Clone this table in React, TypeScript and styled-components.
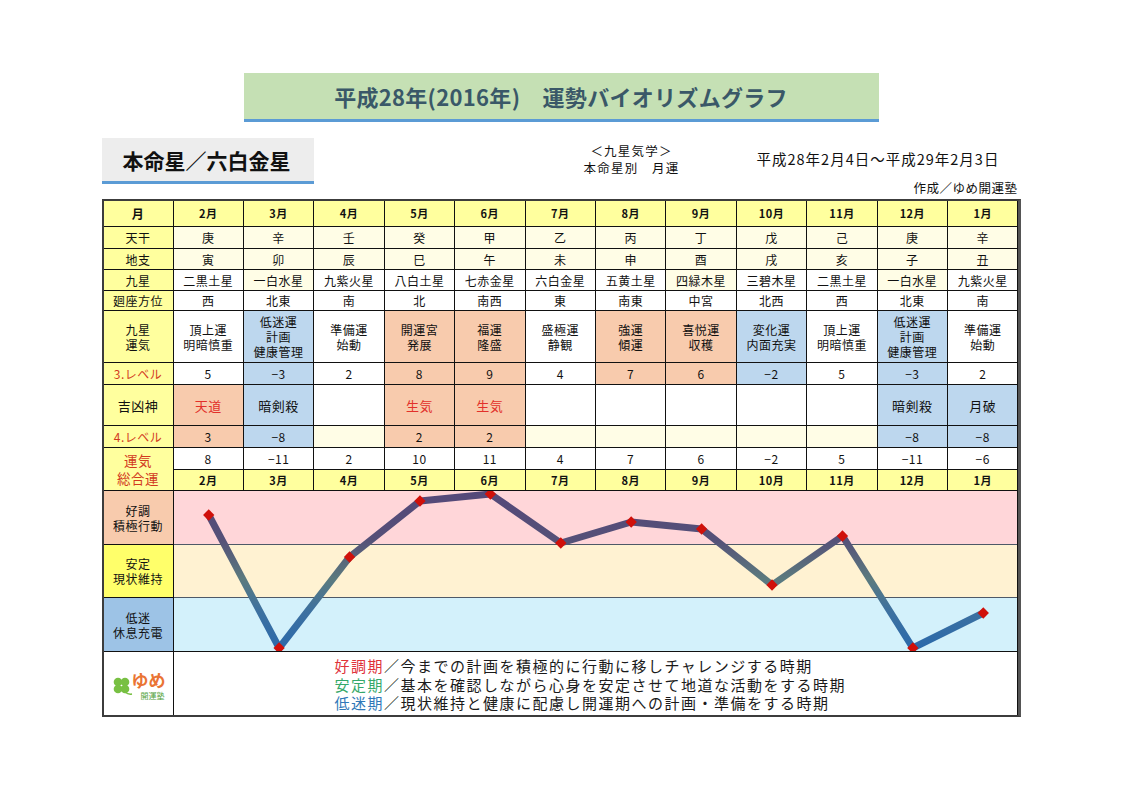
import React from "react";
import styled, { createGlobalStyle } from "styled-components";

const GlobalStyle = createGlobalStyle`
  html, body {
    margin: 0;
    padding: 0;
    background: #fff;
  }
  body {
    font-family: "Noto Sans CJK JP", "Noto Sans", sans-serif;
    color: #111;
  }
`;

type Tone = "white" | "cream" | "peach" | "blue" | "yellow" | "bright" | "sky";

const toneColor: Record<Tone, string> = {
  white: "#ffffff",
  cream: "#fffde6",
  peach: "#f8cbad",
  blue: "#bdd7ee",
  yellow: "#ffff9e",
  bright: "#ffff6a",
  sky: "#9dc3e6",
};

const Page = styled.div`
  width: 1122px;
  padding-top: 73px;
`;

const Content = styled.div`
  width: 919px;
  margin: 0 auto;
`;

const TitleBar = styled.div`
  width: 635px;
  height: 46px;
  margin: 0 auto;
  background: #c5e0b4;
  border-bottom: 3px solid #5b9bd5;
  display: flex;
  align-items: center;
  justify-content: center;
  font-size: 22px;
  font-weight: 700;
  color: #3a5868;
  letter-spacing: 0.3px;
`;

const HeaderRow = styled.div`
  height: 61px;
  margin-top: 16px;
  display: flex;
  align-items: flex-start;
`;

const SubBox = styled.div`
  width: 212px;
  height: 46px;
  box-sizing: border-box;
  background: #ededed;
  border-bottom: 3px solid #5b9bd5;
  display: flex;
  align-items: center;
  padding-left: 21px;
  font-size: 21px;
  font-weight: 700;
  color: #111;
`;

const Kigaku = styled.div`
  width: 100px;
  margin-left: 268px;
  margin-top: 4px;
  text-align: center;
  font-size: 12.5px;
  line-height: 17px;
  letter-spacing: 1.2px;
`;

const RightCol = styled.div`
  width: 263px;
  margin-left: 75px;
  display: flex;
  flex-direction: column;
`;

const DateText = styled.div`
  margin-top: 11px;
  font-size: 14.5px;
  line-height: 20px;
  letter-spacing: 1px;
`;

const Credit = styled.div`
  margin-top: 11px;
  text-align: right;
  padding-right: 2px;
  font-size: 12.5px;
  line-height: 16px;
  letter-spacing: 0.5px;
`;

const Table = styled.div`
  display: grid;
  grid-template-columns: 69px repeat(12, 1fr);
  grid-template-rows: 25px 21px 20px 20px 19px 51px 21px 40px 21px 21px 20px 53px 52px 53px 63px;
  gap: 1px;
  background: #111;
  border: 2px solid #3c3c3c;
  border-right: 3px solid #555;
`;

const Cell = styled.div<{ $tone?: Tone; $red?: boolean; $bold?: boolean; $size?: number; $span?: number }>`
  background: ${(p) => toneColor[p.$tone ?? "white"]};
  color: ${(p) => (p.$red ? "#d23a1e" : "#111")};
  font-weight: ${(p) => (p.$bold ? 700 : 400)};
  font-size: ${(p) => p.$size ?? 12}px;
  line-height: ${(p) => (p.$span ? 18 : 15)}px;
  letter-spacing: 0.5px;
  display: flex;
  flex-direction: column;
  align-items: center;
  justify-content: center;
  text-align: center;
  grid-row: ${(p) => (p.$span ? `span ${p.$span}` : "auto")};
`;

const LuckText = styled.span<{ $red?: boolean }>`
  color: ${(p) => (p.$red ? "#e2302a" : "#111")};
  font-size: 13px;
`;

const ChartBox = styled.div`
  grid-column: 2 / span 12;
  grid-row: 12 / span 3;
  background: #fff;
  svg {
    display: block;
    width: 100%;
    height: 100%;
  }
`;

const LogoCell = styled.div`
  background: #fff;
  display: flex;
  align-items: center;
  justify-content: center;
  padding-top: 4px;
`;

const LogoText = styled.div`
  display: flex;
  flex-direction: column;
  align-items: flex-end;
  margin-left: -1px;
`;

const LogoYume = styled.span`
  display: block;
  color: #ea7434;
  font-size: 17px;
  font-weight: 700;
  line-height: 19px;
`;

const LogoSchool = styled.span`
  display: block;
  color: #54a23c;
  font-size: 8px;
  line-height: 10px;
  margin-top: 2px;
  margin-right: 1px;
`;

const LegendCell = styled.div`
  grid-column: 2 / span 12;
  background: #fff;
  padding: 5px 0 0 161px;
  font-size: 15px;
  line-height: 18.5px;
  letter-spacing: 1.5px;
  color: #1a1a1a;
`;

const Term = styled.span<{ $color: string }>`
  color: ${(p) => p.$color};
`;

const months = ["2月", "3月", "4月", "5月", "6月", "7月", "8月", "9月", "10月", "11月", "12月", "1月"];
const stems = ["庚", "辛", "壬", "癸", "甲", "乙", "丙", "丁", "戊", "己", "庚", "辛"];
const branches = ["寅", "卯", "辰", "巳", "午", "未", "申", "酉", "戌", "亥", "子", "丑"];
const stars = ["二黒土星", "一白水星", "九紫火星", "八白土星", "七赤金星", "六白金星", "五黄土星", "四緑木星", "三碧木星", "二黒土星", "一白水星", "九紫火星"];
const starTones: Tone[] = ["white", "cream", "white", "white", "white", "white", "white", "cream", "white", "white", "cream", "white"];
const directions = ["西", "北東", "南", "北", "南西", "東", "南東", "中宮", "北西", "西", "北東", "南"];
const fortunes = [
  ["頂上運", "明暗慎重"],
  ["低迷運", "計画", "健康管理"],
  ["準備運", "始動"],
  ["開運宮", "発展"],
  ["福運", "隆盛"],
  ["盛極運", "静観"],
  ["強運", "傾運"],
  ["喜悦運", "収穫"],
  ["変化運", "内面充実"],
  ["頂上運", "明暗慎重"],
  ["低迷運", "計画", "健康管理"],
  ["準備運", "始動"],
];
const fortuneTones: Tone[] = ["white", "blue", "white", "peach", "peach", "white", "peach", "peach", "blue", "white", "blue", "white"];
const level3 = [5, -3, 2, 8, 9, 4, 7, 6, -2, 5, -3, 2];
const gods: { text: string; red?: boolean; tone: Tone }[] = [
  { text: "天道", red: true, tone: "peach" },
  { text: "暗剣殺", tone: "blue" },
  { text: "", tone: "white" },
  { text: "生気", red: true, tone: "peach" },
  { text: "生気", red: true, tone: "peach" },
  { text: "", tone: "white" },
  { text: "", tone: "white" },
  { text: "", tone: "white" },
  { text: "", tone: "white" },
  { text: "", tone: "white" },
  { text: "暗剣殺", tone: "blue" },
  { text: "月破", tone: "blue" },
];
const level4: { v: number | null; tone: Tone }[] = [
  { v: 3, tone: "peach" },
  { v: -8, tone: "blue" },
  { v: null, tone: "cream" },
  { v: 2, tone: "peach" },
  { v: 2, tone: "peach" },
  { v: null, tone: "cream" },
  { v: null, tone: "cream" },
  { v: null, tone: "cream" },
  { v: null, tone: "cream" },
  { v: null, tone: "cream" },
  { v: -8, tone: "blue" },
  { v: -8, tone: "blue" },
];
const totals = [8, -11, 2, 10, 11, 4, 7, 6, -2, 5, -11, -6];

const num = (v: number) => (v < 0 ? `−${Math.abs(v)}` : String(v));

const Chart: React.FC = () => {
  const w = 845;
  const colW = 70.5;
  const pts = totals.map((v, i) => [i * colW + colW / 2 - 0.5, 80 - 7 * v]);
  const d = pts.map(([x, y], i) => `${i ? "L" : "M"}${x.toFixed(1)} ${y}`).join(" ");
  return (
    <ChartBox>
      <svg viewBox={`0 0 ${w} 160`} preserveAspectRatio="none">
        <defs>
          <linearGradient id="bio" x1="0" y1="0" x2="0" y2="160" gradientUnits="userSpaceOnUse">
            <stop offset="0" stopColor="#554879" />
            <stop offset="0.3" stopColor="#555078" />
            <stop offset="0.55" stopColor="#5b7a7e" />
            <stop offset="0.75" stopColor="#3d71a0" />
            <stop offset="1" stopColor="#2a69ab" />
          </linearGradient>
        </defs>
        <rect x="0" y="0" width={w} height="54" fill="#ffd6d9" />
        <rect x="0" y="54" width={w} height="53" fill="#fff2d2" />
        <rect x="0" y="107" width={w} height="53" fill="#d3f1fb" />
        <line x1="0" y1="53.5" x2={w} y2="53.5" stroke="#4d5866" strokeWidth="1" />
        <line x1="0" y1="106.5" x2={w} y2="106.5" stroke="#4d5866" strokeWidth="1" />
        <path d={d} fill="none" stroke="url(#bio)" strokeWidth="7" strokeLinejoin="round" />
        {pts.map(([x, y], i) => (
          <rect key={i} x={x - 4} y={y - 4} width="8" height="8" fill="#d0100a" transform={`rotate(45 ${x} ${y})`} />
        ))}
      </svg>
    </ChartBox>
  );
};

const Logo: React.FC = () => (
  <LogoCell>
    <svg width="22" height="24" viewBox="0 0 22 24">
      <circle cx="7" cy="8" r="4.3" fill="#78c043" />
      <circle cx="14" cy="8" r="4.3" fill="#78c043" />
      <circle cx="7" cy="15" r="4.3" fill="#78c043" />
      <circle cx="14" cy="15" r="4.3" fill="#78c043" />
      <path d="M11 12 C13 18 16 21 21 20" fill="none" stroke="#78c043" strokeWidth="1.4" />
    </svg>
    <LogoText>
      <LogoYume>ゆめ</LogoYume>
      <LogoSchool>開運塾</LogoSchool>
    </LogoText>
  </LogoCell>
);

const App: React.FC = () => {
  return (
    <Page>
      <GlobalStyle />
      <Content>
        <TitleBar>平成28年(2016年)　運勢バイオリズムグラフ</TitleBar>
        <HeaderRow>
          <SubBox>本命星／六白金星</SubBox>
          <Kigaku>
            <div>＜九星気学＞</div>
            <div>本命星別　月運</div>
          </Kigaku>
          <RightCol>
            <DateText>平成28年2月4日～平成29年2月3日</DateText>
            <Credit>作成／ゆめ開運塾</Credit>
          </RightCol>
        </HeaderRow>

        <Table>
          <Cell $tone="yellow" $bold>月</Cell>
          {months.map((m, i) => (
            <Cell key={`m${i}`} $tone="yellow" $bold $size={11}>{m}</Cell>
          ))}

          <Cell $tone="yellow">天干</Cell>
          {stems.map((s, i) => (
            <Cell key={`s${i}`} $tone="cream">{s}</Cell>
          ))}

          <Cell $tone="yellow">地支</Cell>
          {branches.map((s, i) => (
            <Cell key={`b${i}`} $tone="cream">{s}</Cell>
          ))}

          <Cell $tone="yellow">九星</Cell>
          {stars.map((s, i) => (
            <Cell key={`k${i}`} $tone={starTones[i]}>{s}</Cell>
          ))}

          <Cell $tone="yellow">廻座方位</Cell>
          {directions.map((s, i) => (
            <Cell key={`d${i}`}>{s}</Cell>
          ))}

          <Cell $tone="yellow">
            <span>九星</span>
            <span>運気</span>
          </Cell>
          {fortunes.map((lines, i) => (
            <Cell key={`f${i}`} $tone={fortuneTones[i]}>
              {lines.map((l) => (
                <span key={l}>{l}</span>
              ))}
            </Cell>
          ))}

          <Cell $tone="yellow" $red>3.レベル</Cell>
          {level3.map((v, i) => (
            <Cell key={`l3${i}`} $tone={fortuneTones[i]}>{num(v)}</Cell>
          ))}

          <Cell $tone="yellow" $size={13}>吉凶神</Cell>
          {gods.map((g, i) => (
            <Cell key={`g${i}`} $tone={g.tone}>
              <LuckText $red={g.red}>{g.text}</LuckText>
            </Cell>
          ))}

          <Cell $tone="yellow" $red>4.レベル</Cell>
          {level4.map((c, i) => (
            <Cell key={`l4${i}`} $tone={c.tone}>{c.v === null ? "" : num(c.v)}</Cell>
          ))}

          <Cell $tone="yellow" $red $span={2} $size={13.5}>
            <span>運気</span>
            <span>総合運</span>
          </Cell>
          {totals.map((v, i) => (
            <Cell key={`t${i}`}>{num(v)}</Cell>
          ))}
          {months.map((m, i) => (
            <Cell key={`mb${i}`} $tone="yellow" $bold $size={11}>{m}</Cell>
          ))}

          <Cell $tone="peach">
            <span>好調</span>
            <span>積極行動</span>
          </Cell>
          <Chart />
          <Cell $tone="bright">
            <span>安定</span>
            <span>現状維持</span>
          </Cell>
          <Cell $tone="sky">
            <span>低迷</span>
            <span>休息充電</span>
          </Cell>

          <Logo />
          <LegendCell>
            <div>
              <Term $color="#e0323a">好調期</Term>／今までの計画を積極的に行動に移しチャレンジする時期
            </div>
            <div>
              <Term $color="#35a86a">安定期</Term>／基本を確認しながら心身を安定させて地道な活動をする時期
            </div>
            <div>
              <Term $color="#2f78b8">低迷期</Term>／現状維持と健康に配慮し開運期への計画・準備をする時期
            </div>
          </LegendCell>
        </Table>
      </Content>
    </Page>
  );
};

export default App;
